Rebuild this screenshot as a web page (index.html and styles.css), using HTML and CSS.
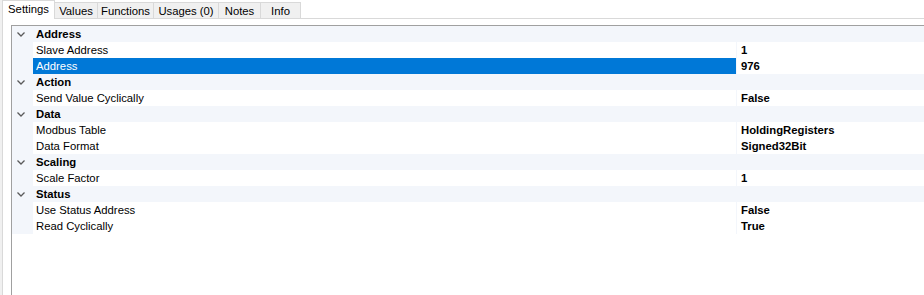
FILE: index.html
```html
<!DOCTYPE html>
<html lang="en">
<head>
    <meta charset="UTF-8">
    <title>Settings</title>
    <link rel="stylesheet" href="styles.css">
</head>
<body>
    <div class="window">
        <div class="tabs">
            <div class="tab active tab-settings">Settings</div>
            <div class="tab tab-values">Values</div>
            <div class="tab tab-functions">Functions</div>
            <div class="tab tab-usages">Usages (0)</div>
            <div class="tab tab-notes">Notes</div>
            <div class="tab tab-info">Info</div>
        </div>
        <div class="page">
            <div class="grid">
                <div class="rows">
                    <div class="row cat"><span class="gutter"><svg width="8" height="5" viewBox="0 0 8 5"><polyline points="0.5,0.5 4,4 7.5,0.5"/></svg></span><span class="name">Address</span></div>
                    <div class="row"><span class="gutter"></span><span class="name">Slave Address</span><span class="value">1</span></div>
                    <div class="row selected"><span class="gutter"></span><span class="name">Address</span><span class="value">976</span></div>

                    <div class="row cat"><span class="gutter"><svg width="8" height="5" viewBox="0 0 8 5"><polyline points="0.5,0.5 4,4 7.5,0.5"/></svg></span><span class="name">Action</span></div>
                    <div class="row"><span class="gutter"></span><span class="name">Send Value Cyclically</span><span class="value">False</span></div>

                    <div class="row cat"><span class="gutter"><svg width="8" height="5" viewBox="0 0 8 5"><polyline points="0.5,0.5 4,4 7.5,0.5"/></svg></span><span class="name">Data</span></div>
                    <div class="row"><span class="gutter"></span><span class="name">Modbus Table</span><span class="value">HoldingRegisters</span></div>
                    <div class="row"><span class="gutter"></span><span class="name">Data Format</span><span class="value">Signed32Bit</span></div>

                    <div class="row cat"><span class="gutter"><svg width="8" height="5" viewBox="0 0 8 5"><polyline points="0.5,0.5 4,4 7.5,0.5"/></svg></span><span class="name">Scaling</span></div>
                    <div class="row"><span class="gutter"></span><span class="name">Scale Factor</span><span class="value">1</span></div>

                    <div class="row cat"><span class="gutter"><svg width="8" height="5" viewBox="0 0 8 5"><polyline points="0.5,0.5 4,4 7.5,0.5"/></svg></span><span class="name">Status</span></div>
                    <div class="row"><span class="gutter"></span><span class="name">Use Status Address</span><span class="value">False</span></div>
                    <div class="row"><span class="gutter"></span><span class="name">Read Cyclically</span><span class="value">True</span></div>
                </div>
            </div>
        </div>
    </div>
</body>
</html>
```

FILE: styles.css
```css
body {
    margin: 0;
    background: #fff;
    color: #000;
    font-family: "Liberation Sans", Arial, sans-serif;
    font-size: 11.3px;
}

.window {
    height: 295px;
    border-left: 2px solid #f0f0f0;
    display: flex;
    flex-direction: column;
    box-sizing: border-box;
}

/* Tab strip */
.tabs {
    display: flex;
    align-items: flex-end;
    height: 19px;
    border-bottom: 1px solid #d9d9d9;
    box-sizing: border-box;
}

.tab {
    height: 16px;
    line-height: 16px;
    text-align: center;
    background: #f0f0f0;
    border: 1px solid #d9d9d9;
    border-bottom: none;
    margin-left: -1px;
    box-sizing: border-box;
}

.tab:first-child {
    margin-left: 0;
}

.tab.active {
    position: relative;
    height: 19px;
    line-height: 16px;
    margin-bottom: -1px;
    background: #fff;
    z-index: 1;
}

.tab-settings { width: 53px; }
.tab-values { width: 44px; }
.tab-functions { width: 57px; }
.tab-usages { width: 66px; }
.tab-notes { width: 43px; }
.tab-info { width: 41px; }

/* Property grid */
.page {
    flex: 1;
    border-left: 1px solid #d9d9d9;
    padding: 6px 0 0 8px;
    display: flex;
}

.grid {
    flex: 1;
    border-top: 1px solid #a0a0a0;
    border-left: 1px solid #a0a0a0;
}

.rows {
    display: flex;
    flex-direction: column;
    gap: 1px;
    padding-bottom: 1px;
    background: #f3f6fb;
}

.row {
    display: grid;
    grid-template-columns: 20px 703px 1fr;
    column-gap: 1px;
    height: 15px;
    line-height: 15px;
}

.gutter {
    display: flex;
    align-items: center;
    padding-left: 5px;
}

.gutter svg {
    fill: none;
    stroke: #5a5a5a;
    stroke-width: 1.3;
}

.name,
.value {
    padding-top: 1px;
    background: #fff;
    white-space: nowrap;
    box-sizing: border-box;
}

.name {
    padding-left: 3px;
}

.value {
    padding-left: 4px;
    font-weight: bold;
}

.cat .name {
    background: transparent;
    font-weight: bold;
}

.selected .name {
    background: #0078d7;
    color: #fff;
}
```
